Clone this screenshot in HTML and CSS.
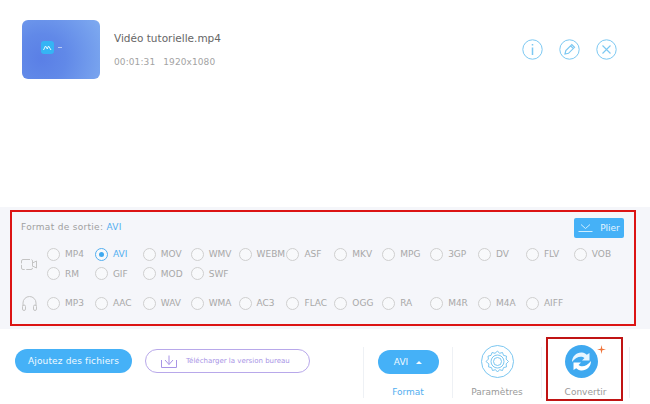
FILE: index.html
```html
<!DOCTYPE html>
<html lang="fr">
<head>
<meta charset="utf-8">
<title>Convertir</title>
<link rel="stylesheet" href="styles.css">
</head>
<body>
<section class="file-row">
  <div class="thumb">
    <svg class="thumb-logo" width="13" height="13" viewBox="0 0 13 13"><rect width="13" height="13" rx="3" fill="#35b4f4"/><path d="M2.500 9l2-4 1.800 3 1.200-3 2.500 4" fill="none" stroke="#e6f7ff" stroke-width="1"/></svg>
    <span class="thumb-dot"></span>
  </div>
  <div class="meta">
    <div class="name">Vidéo tutorielle.mp4</div>
    <div class="info"><span>00:01:31</span><span>1920x1080</span></div>
  </div>
  <div class="actions">
    <svg width="21" height="21" viewBox="0 0 21 21" fill="none" stroke="#7cc8f2"><circle cx="10.500" cy="10.500" r="9.700"/><path d="M10.500 8.500V16M10.500 5V6.600" stroke-width="1.500"/></svg>
    <svg width="21" height="21" viewBox="0 0 21 21" fill="none" stroke="#7cc8f2"><circle cx="10.500" cy="10.500" r="9.700"/><path d="M6 15l.8-3.400 6-6 2.700 2.700-6 6zM11.600 6.800l2.700 2.700" stroke-width="1.200"/></svg>
    <svg width="21" height="21" viewBox="0 0 21 21" fill="none" stroke="#7cc8f2"><circle cx="10.500" cy="10.500" r="9.700"/><path d="M6.500 6.500l8 8M14.500 6.500l-8 8" stroke-width="1.100"/></svg>
  </div>
</section>

<section class="panel">
  <div class="box">
    <div class="box-head">
      <div class="title">Format de sortie: <span class="accent">AVI</span></div>
      <button class="fold"><svg width="15" height="8" viewBox="0 0 15 8" fill="none" stroke="#cdeeff"><path d="M3 .5l4.500 4L12 .5M.5 7.500h14"/></svg>Plier</button>
    </div>
    <div class="group video">
      <svg class="kind" width="17" height="13" viewBox="0 0 17 13" fill="none" stroke="#c4c4c4"><rect x=".5" y="1.500" width="11" height="10" rx="1.500" stroke-dasharray="7 1.500"/><path d="M11.500 5l4-2v7l-4-2"/></svg>
      <div class="formats">
        <label class="opt"><i></i>MP4</label>
        <label class="opt on"><i></i>AVI</label>
        <label class="opt"><i></i>MOV</label>
        <label class="opt"><i></i>WMV</label>
        <label class="opt"><i></i>WEBM</label>
        <label class="opt"><i></i>ASF</label>
        <label class="opt"><i></i>MKV</label>
        <label class="opt"><i></i>MPG</label>
        <label class="opt"><i></i>3GP</label>
        <label class="opt"><i></i>DV</label>
        <label class="opt"><i></i>FLV</label>
        <label class="opt"><i></i>VOB</label>
        <label class="opt"><i></i>RM</label>
        <label class="opt"><i></i>GIF</label>
        <label class="opt"><i></i>MOD</label>
        <label class="opt"><i></i>SWF</label>
      </div>
    </div>
    <div class="group audio">
      <svg class="kind" width="17" height="16" viewBox="0 0 17 16" fill="none" stroke="#c4c4c4"><path d="M2 11V8a6.500 6.500 0 0 1 13 0v3"/><rect x="1.500" y="10" width="3" height="5.500" rx="1.500"/><rect x="12.500" y="10" width="3" height="5.500" rx="1.500"/></svg>
      <div class="formats">
        <label class="opt"><i></i>MP3</label>
        <label class="opt"><i></i>AAC</label>
        <label class="opt"><i></i>WAV</label>
        <label class="opt"><i></i>WMA</label>
        <label class="opt"><i></i>AC3</label>
        <label class="opt"><i></i>FLAC</label>
        <label class="opt"><i></i>OGG</label>
        <label class="opt"><i></i>RA</label>
        <label class="opt"><i></i>M4R</label>
        <label class="opt"><i></i>M4A</label>
        <label class="opt"><i></i>AIFF</label>
      </div>
    </div>
  </div>
</section>

<section class="bottom">
  <button class="add">Ajoutez des fichiers</button>
  <button class="desktop">
    <svg width="16" height="13" viewBox="0 0 16 13" fill="none" stroke="#a894e6"><path d="M.5 5v7.500h15V5M4 5l4 4.500L12 5M8 9.500V.5"/></svg>
    Télécharger la version bureau
  </button>
  <div class="tools">
    <div class="tool">
      <button class="fmt">AVI<span class="caret"></span></button>
      <span class="tool-label accent">Format</span>
    </div>
    <div class="tool">
      <svg width="33" height="33" viewBox="0 0 33 33" fill="none" stroke="#6cbfee" stroke-width=".9"><circle cx="16.500" cy="16.500" r="16"/><path d="M16.500 6l2 2.300 3-.8 1 2.900 3 .7-.4 3 2.400 2.400-2.400 2.400.4 3-3 .7-1 2.900-3-.8-2 2.300-2-2.300-3 .8-1-2.900-3-.7.4-3L5 16.500l2.400-2.400-.4-3 3-.7 1-2.900 3 .8z"/><circle cx="16.500" cy="16.500" r="6.500"/><circle cx="16.500" cy="16.500" r="4"/></svg>
      <span class="tool-label">Paramètres</span>
    </div>
    <div class="tool convert">
      <div class="convert-icon">
        <svg width="33" height="33" viewBox="0 0 33 33"><circle cx="16.500" cy="16.500" r="16.500" fill="#3fa9f0"/><path d="M7 17c0-6 5-10 10-9.500 2 .2 3.500 1 4.800 2.200L24.500 8v7.500H17l2.500-2.500c-3-2.500-8.500-1.500-12.500 4z" fill="#e8f6ff"/><path d="M26 16c0 6-5 10-10 9.500-2-.2-3.500-1-4.800-2.200L8.500 25v-7.500H16L13.500 20c3 2.500 8.500 1.500 12.500-4z" fill="#fff"/></svg>
        <svg class="spark" width="9" height="9" viewBox="0 0 9 9"><path d="M4.500 0l.8 3.700L9 4.500l-3.700.8L4.500 9l-.8-3.700L0 4.500l3.700-.8z" fill="#f0743a"/></svg>
      </div>
      <span class="tool-label">Convertir</span>
    </div>
  </div>
</section>
</body>
</html>
```

FILE: styles.css
```css
*, *::before, *::after { box-sizing: border-box; }
html, body { margin: 0; padding: 0; }
body {
  width: 650px;
  height: 404px;
  overflow: hidden;
  background: #fff;
  font-family: "DejaVu Sans", Verdana, sans-serif;
  color: #999;
}
button { font-family: inherit; border: 0; padding: 0; }
.accent { color: #52aef0; }

.file-row {
  height: 207px;
  padding: 20px 33px 0 22px;
  display: flex;
  align-items: flex-start;
}
.thumb {
  width: 78px;
  height: 59px;
  border-radius: 6px;
  background: radial-gradient(circle at 25% 65%, #5a7fe6 0%, #6189e8 35%, #7fabf0 100%);
  display: flex;
  align-items: center;
  padding: 0 0 4px 19px;
  gap: 4px;
}
.thumb-dot { width: 4px; height: 1px; background: #b7cbf5; }
.meta { margin-left: 14px; padding-top: 10px; }
.name { font-size: 10.500px; line-height: 16px; color: #666; }
.info {
  display: flex;
  gap: 8px;
  margin-top: 9px;
  font-size: 9px;
  line-height: 14px;
  letter-spacing: .1px;
  color: #a3a3a3;
}
.actions {
  margin-left: auto;
  margin-top: 19px;
  display: flex;
  gap: 16px;
}

.panel {
  height: 122px;
  padding: 3px 14px 3px 10px;
  background: #f5f6fa;
}
.box {
  height: 116px;
  border: 2px solid #dc1414;
  padding: 0 0 0 9px;
}
.box-head {
  height: 30px;
  display: flex;
  align-items: center;
  justify-content: space-between;
  padding-right: 10px;
}
.title { font-size: 9px; letter-spacing: .3px; color: #a0a0a0; }
.fold {
  width: 50px;
  height: 20px;
  margin-top: 2px;
  background: #45b1f7;
  border-radius: 2px;
  color: #e4f5ff;
  font-size: 9px;
  display: flex;
  align-items: center;
  justify-content: center;
  gap: 7px;
}
.group { display: flex; align-items: center; }
.kind { flex: none; margin-right: 9px; }
.video { height: 44px; }
.audio { margin-top: 5px; height: 24px; }
.formats {
  display: grid;
  grid-template-columns: repeat(12, 47.900px);
  grid-auto-rows: 19.500px;
  align-items: center;
}
.opt {
  display: flex;
  align-items: center;
  gap: 5px;
  font-size: 9px;
  color: #a8a8a8;
  white-space: nowrap;
}
.opt i {
  flex: none;
  width: 13px;
  height: 13px;
  border: 1px solid #cfcfcf;
  border-radius: 50%;
  background: #f8f9fb;
  display: flex;
  align-items: center;
  justify-content: center;
}
.opt.on { color: #52aef0; }
.opt.on i { border-color: #52aef0; }
.opt.on i::after {
  content: "";
  width: 5px;
  height: 5px;
  border-radius: 50%;
  background: #3fa9f0;
}

.bottom {
  height: 75px;
  padding: 0 20px 0 15px;
  display: flex;
  align-items: flex-start;
}
.add {
  width: 117px;
  height: 24px;
  margin-top: 20px;
  border-radius: 12px;
  background: #45b1f7;
  color: #f1faff;
  font-size: 9px;
  letter-spacing: .15px;
}
.desktop {
  width: 165px;
  height: 24px;
  margin: 20px 0 0 13px;
  border: 1px solid #b8a8ea;
  border-radius: 12px;
  background: #fff;
  color: #a894e6;
  font-size: 7px;
  display: flex;
  align-items: center;
  gap: 9px;
  padding-left: 15px;
}
.tools {
  margin-left: auto;
  margin-top: 18px;
  display: flex;
}
.tool {
  width: 89px;
  height: 51px;
  border-left: 1px solid #eef1f5;
  display: flex;
  flex-direction: column;
  align-items: center;
  justify-content: space-between;
}
.tool:last-child { border-right: 1px solid #eef1f5; }
.tool-label { font-size: 9px; line-height: 12px; color: #999; }
.tool-label.accent { color: #52aef0; }
.tool svg { margin-top: -2px; }
.fmt {
  width: 61px;
  height: 24px;
  margin-top: 3px;
  border-radius: 12px;
  background: #45b1f7;
  color: #f1faff;
  font-size: 9px;
  display: flex;
  align-items: center;
  justify-content: center;
  gap: 8px;
}
.caret {
  border: 3px solid transparent;
  border-top: 0;
  border-bottom: 3px solid #f1faff;
}
.convert { position: relative; }
.convert::after {
  content: "";
  position: absolute;
  left: 4px;
  top: -10px;
  width: 77px;
  height: 64px;
  border: 2px solid #c01414;
}
.convert-icon { position: relative; margin-right: 8px; height: 33px; }
.spark { position: absolute; top: 0; right: -8px; margin: 0; }
```
